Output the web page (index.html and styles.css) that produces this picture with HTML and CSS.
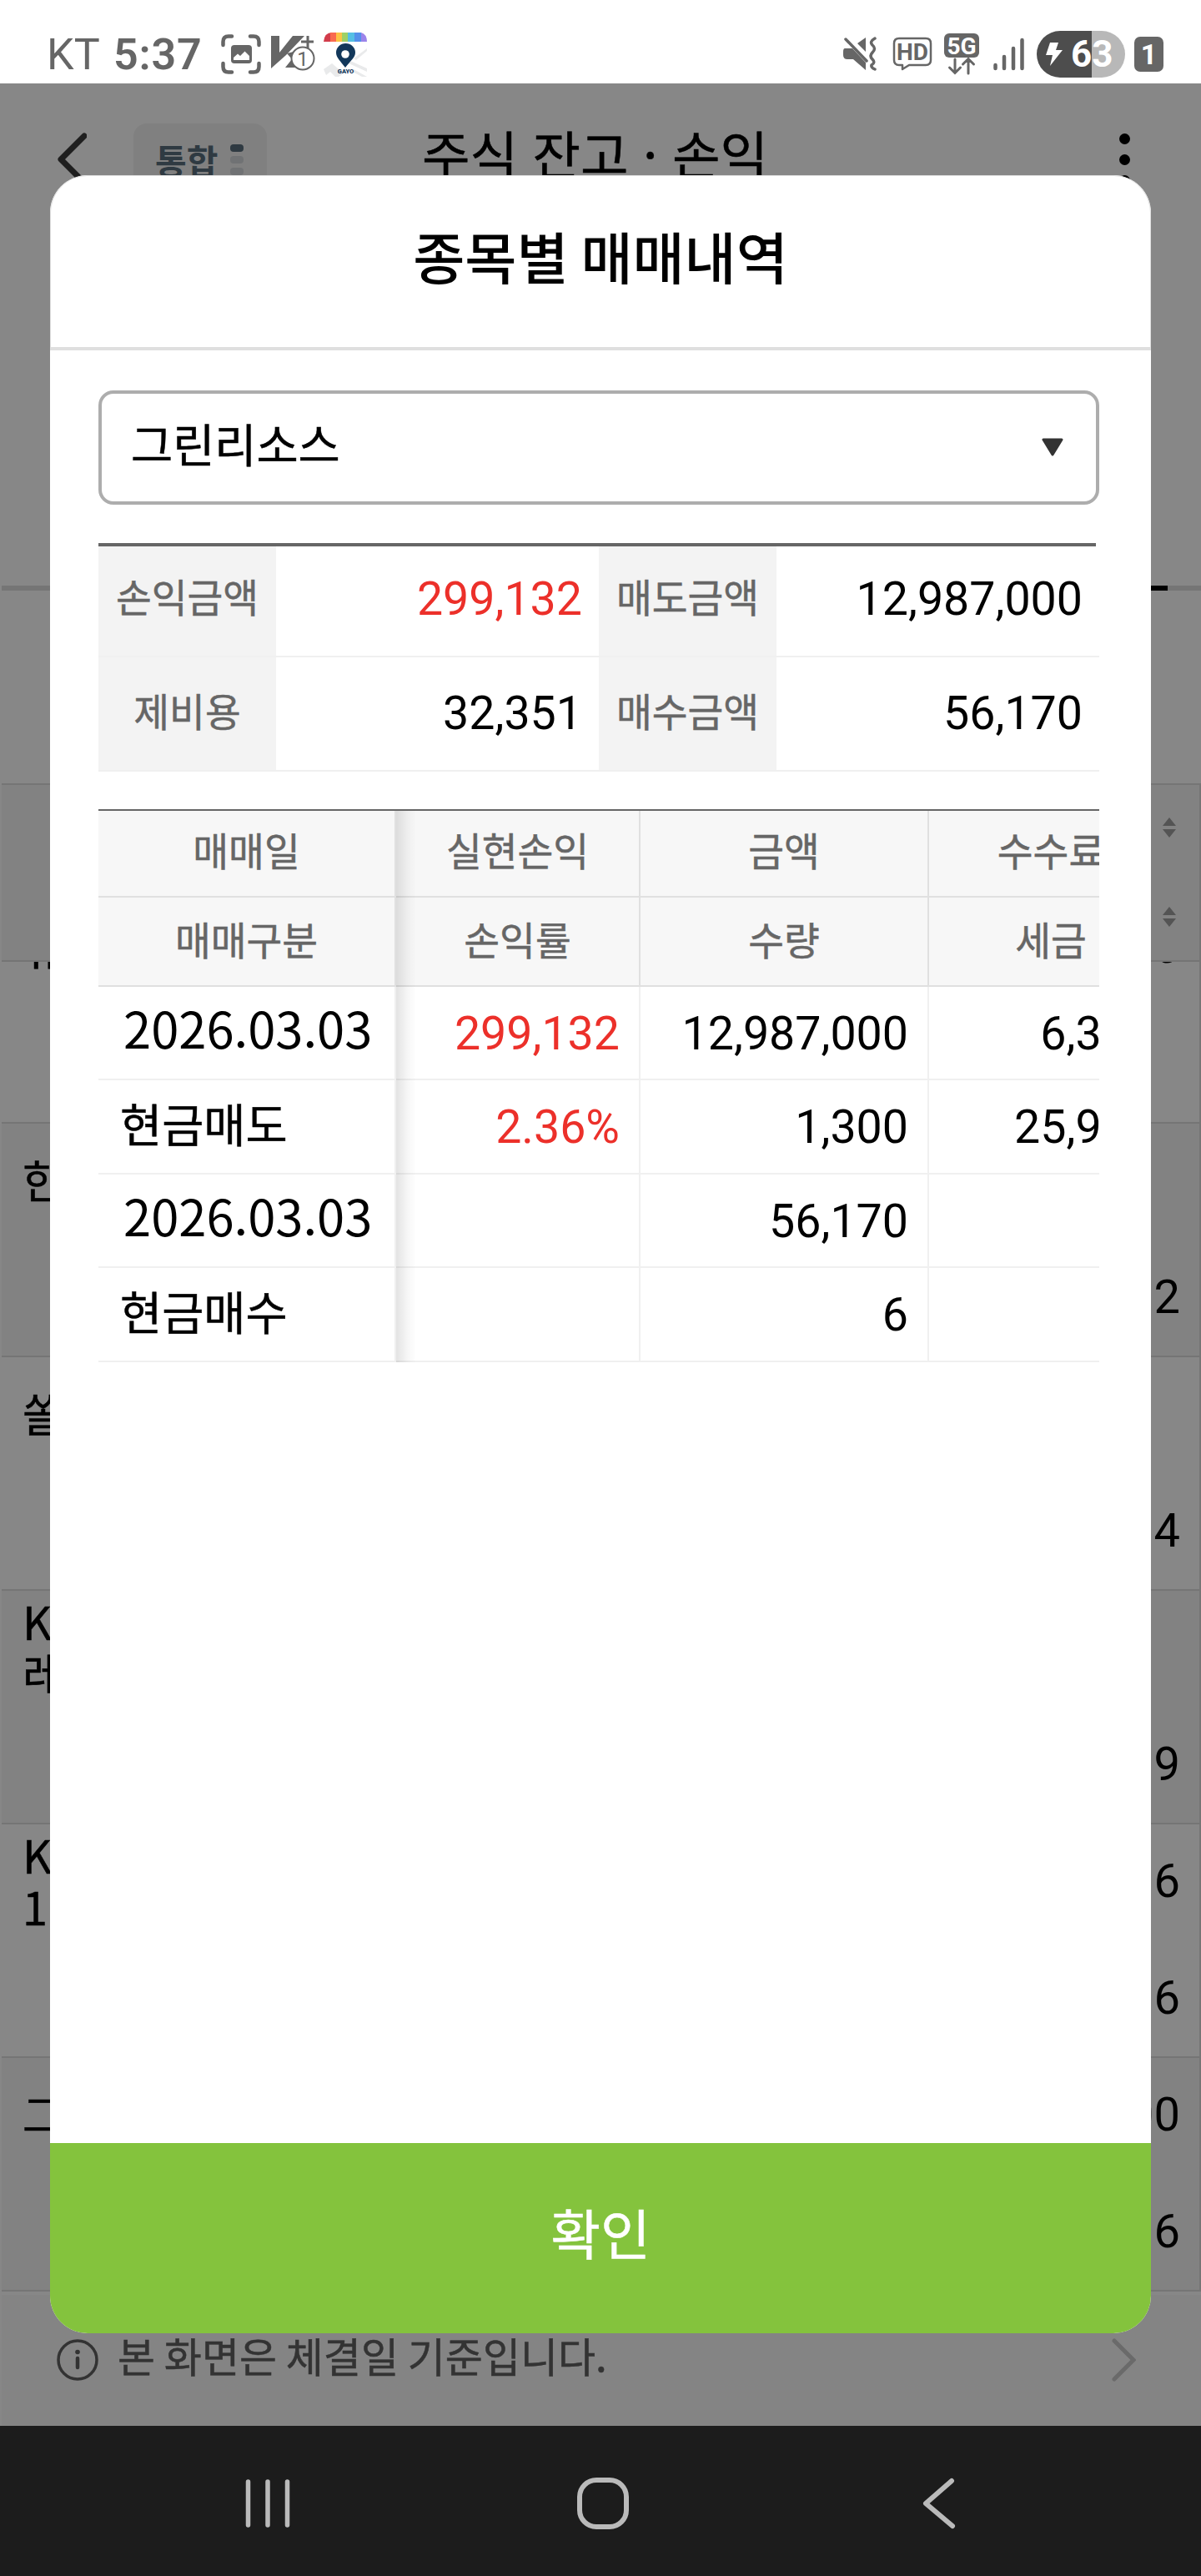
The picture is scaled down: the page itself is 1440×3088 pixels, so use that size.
FILE: index.html
```html
<!DOCTYPE html>
<html lang="ko">
<head>
    <meta charset="UTF-8">
    <meta name="viewport" content="width=device-width, initial-scale=1.0">
    <title>종목별 매매내역</title>
    <link rel="stylesheet" href="styles.css">
</head>
<body>
<div class="screen">
    <div class="statusbar">
        <div class="status-left">
            <span class="carrier">KT</span>
            <span class="time">5:37</span>
            <svg class="ic-shot" width="48" height="48" viewBox="0 0 48 48" fill="none">
                <path d="M2.500 13V9Q2.500 2.500 9 2.500H13M35 2.500H39Q45.500 2.500 45.500 9V13M45.500 35V39Q45.500 45.500 39 45.500H35M13 45.500H9Q2.500 45.500 2.500 39V35" stroke="#666" stroke-width="4.500" stroke-linecap="round"/>
                <rect x="12" y="13" width="25" height="22" rx="4" fill="#666"/>
                <path d="M15 31V28L20 23.500L23 26L28.500 20.500L34 26V31Z" fill="#fff"/>
            </svg>
            <svg class="ic-k" width="54" height="46" viewBox="0 0 54 46">
                <path d="M0 1H10V21L26 1H40L18 24L0 40Z" fill="#666"/>
                <path d="M17 39L25 29L19 22L27 20L32 39Z" fill="#666"/>
                <path d="M36 8H51M44 1V16" stroke="#666" stroke-width="3"/>
                <circle cx="38" cy="28" r="13.500" fill="#fff" stroke="#666" stroke-width="2"/>
                <text x="38" y="36.500" class="k-num">1</text>
            </svg>
            <svg class="ic-gayo" width="52" height="54" viewBox="0 0 52 54">
                <path d="M0 45L10 38L24 50L18 54H14L8 48L3 52ZM30 34L52 44V48L28 37ZM36 45L52 54H46L33 47ZM36 32L52 20V23L39 34Z" fill="#e9eaeb"/>
                <path d="M0 12Q1 1 10 1H8V12Z" fill="#d23c4b"/>
                <path d="M8 1H15V12H8Z" fill="#f96a50"/>
                <path d="M15 1H22V12H15Z" fill="#fdc344"/>
                <path d="M22 1H29V12H22Z" fill="#9ed166"/>
                <path d="M29 1H37V12H29Z" fill="#55bfe4"/>
                <path d="M37 1H45V12H37Z" fill="#5490ea"/>
                <path d="M45 1Q52 3 52 12H45Z" fill="#9c84ea"/>
                <path d="M26 43C20 35 15 31 15 25A11.500 11 0 0 1 38 25C38 31 32 35 26 43Z" fill="#12375a"/>
                <circle cx="26" cy="27" r="4.800" fill="#fff"/>
                <text x="26.500" y="50" class="gayo-text">GAYO</text>
            </svg>
        </div>
        <div class="status-right">
            <svg class="ic-mute" width="42" height="42" viewBox="0 0 42 42">
                <path d="M2 14H11L27 31V40L12 27H5Q0 27 0 22V18Q0 14 2 14ZM17 8L27 1V18Z" fill="#666"/>
                <path d="M3 3L28 29" stroke="#666" stroke-width="3.500" stroke-linecap="round"/>
                <path d="M38 2Q31 6 35 10Q40 14 35 19Q31 23 35 27Q39 31 34 34Q33 37 38 39" fill="none" stroke="#666" stroke-width="3.500" stroke-linecap="round"/>
            </svg>
            <svg class="ic-hd" width="48" height="42" viewBox="0 0 48 42">
                <path d="M8 2H40Q46 2 46 8V28Q46 34 40 34H20L12 39V34H8Q2 34 2 28V8Q2 2 8 2Z" fill="none" stroke="#666" stroke-width="2.500" stroke-linejoin="round"/>
                <text x="24" y="27.500" class="hd-text">HD</text>
            </svg>
            <svg class="ic-5g" width="42" height="50" viewBox="0 0 42 50">
                <rect x="0" y="0" width="42" height="29" rx="6" fill="#666"/>
                <text x="21" y="24.500" class="g-text">5G</text>
                <path d="M13 31V47M6.500 41L13 47.500L19.500 41M29 48V31M22.500 37L29 30.500L35.500 37" fill="none" stroke="#666" stroke-width="3" stroke-linecap="round"/>
            </svg>
            <svg class="ic-signal" width="37" height="40" viewBox="0 0 37 40">
                <path d="M2.500 33V37M13 23V37M24 13V37M34.500 3V37" stroke="#666" stroke-width="4.500" stroke-linecap="round"/>
            </svg>
            <div class="battery">
                <svg width="20" height="30" viewBox="0 0 20 30"><path d="M5 1H15L12 10H20L5 29L8 16H0Z" fill="#fff"/></svg>
                <span>63</span>
            </div>
            <div class="sim">1</div>
        </div>
    </div>

    <div class="app">
        <div class="app-header">
            <svg class="back" width="36" height="64" viewBox="0 0 36 64"><path d="M33 4L5 32L33 60" fill="none" stroke="#1f1f1f" stroke-width="7" stroke-linecap="round" stroke-linejoin="round"/></svg>
            <div class="pill">통합<span class="pill-dots"><i></i><i></i><i></i></span></div>
            <div class="app-title">주식 잔고 · 손익</div>
            <div class="kebab"><i></i><i></i><i></i></div>
        </div>
        <div class="tabs"><div class="tab-on"></div></div>
        <div class="list-head">
            <svg width="18" height="26" viewBox="0 0 18 26"><path d="M9 1L17 11H1ZM9 25L17 15H1Z" fill="#545454"/></svg>
            <svg width="18" height="26" viewBox="0 0 18 26"><path d="M9 1L17 11H1ZM9 25L17 15H1Z" fill="#545454"/></svg>
        </div>
        <div class="list">
            <div class="item"><div class="name">유</div><div class="num">0</div><div class="num"></div></div>
            <div class="item"><div class="name">한</div><div class="num"></div><div class="num">2</div></div>
            <div class="item"><div class="name">쏠</div><div class="num"></div><div class="num">4</div></div>
            <div class="item"><div class="name">K<br>레</div><div class="num"></div><div class="num">9</div></div>
            <div class="item"><div class="name">K<br>1</div><div class="num">6</div><div class="num">6</div></div>
            <div class="item"><div class="name">그</div><div class="num">00</div><div class="num">6</div></div>
        </div>
        <div class="notice">
            <svg width="50" height="50" viewBox="0 0 50 50"><circle cx="25" cy="25" r="23" fill="none" stroke="#333" stroke-width="3.500"/><circle cx="25" cy="15.500" r="2.800" fill="#333"/><path d="M25 23V34" stroke="#333" stroke-width="4.500" stroke-linecap="round"/></svg>
            <span>본 화면은 체결일 기준입니다.</span>
            <svg class="next" width="30" height="52" viewBox="0 0 30 52"><path d="M4 3L27 26L4 49" fill="none" stroke="#6a6a6a" stroke-width="5" stroke-linecap="round"/></svg>
        </div>
    </div>

    <div class="modal">
        <div class="modal-header">종목별 매매내역</div>
        <div class="modal-body">
            <div class="select">
                <span>그린리소스</span>
                <svg width="28" height="23" viewBox="0 0 28 23"><path d="M3 2H25L14 20Z" fill="#333" stroke="#333" stroke-width="3" stroke-linejoin="round"/></svg>
            </div>
            <div class="rule"></div>
            <div class="summary">
                <div class="label">손익금액</div><div class="value red">299,132</div>
                <div class="label">매도금액</div><div class="value">12,987,000</div>
                <div class="label low">제비용</div><div class="value low">32,351</div>
                <div class="label low">매수금액</div><div class="value low">56,170</div>
            </div>
            <div class="trades">
                <div class="grid">
                    <div class="th">매매일</div><div class="th">실현손익</div><div class="th">금액</div><div class="th">수수료</div>
                    <div class="th low">매매구분</div><div class="th low">손익률</div><div class="th low">수량</div><div class="th low">세금</div>
                    <div class="td date">2026.03.03</div><div class="td red">299,132</div><div class="td">12,987,000</div><div class="td">6,377</div>
                    <div class="td kind">현금매도</div><div class="td red">2.36%</div><div class="td">1,300</div><div class="td">25,974</div>
                    <div class="td date">2026.03.03</div><div class="td"></div><div class="td">56,170</div><div class="td"></div>
                    <div class="td kind">현금매수</div><div class="td"></div><div class="td">6</div><div class="td"></div>
                </div>
                <div class="shadow"></div>
            </div>
        </div>
        <div class="confirm">확인</div>
    </div>

    <div class="navbar">
        <svg width="54" height="60" viewBox="0 0 54 60"><path d="M3.500 4V56M27 4V56M50.500 4V56" stroke="#bababa" stroke-width="5.500" stroke-linecap="round"/></svg>
        <svg class="home" width="62" height="62" viewBox="0 0 62 62"><rect x="3" y="3" width="56" height="56" rx="20" fill="none" stroke="#bababa" stroke-width="6"/></svg>
        <svg width="40" height="62" viewBox="0 0 40 62"><path d="M35 4L4 31L36 58" fill="none" stroke="#bababa" stroke-width="6" stroke-linecap="round" stroke-linejoin="round"/></svg>
    </div>
</div>
</body>
</html>
```
FILE: styles.css
```css
*{
    box-sizing:border-box;
}
body{
    margin:0;
    font-family:"Noto Sans CJK KR", sans-serif;
    color:#000;
}
svg{
    display:block;
    flex:none;
}
.screen{
    position:relative;
    display:flex;
    flex-direction:column;
    width:1440px;
    height:3088px;
    overflow:hidden;
}

/* status bar */
.statusbar{
    display:flex;
    justify-content:space-between;
    height:100px;
    background:#fff;
    font-family:Roboto, sans-serif;
    color:#666;
}
.status-left, .status-right{
    display:flex;
    align-items:center;
    height:60px;
    margin-top:35px;
}
.status-left{
    padding-left:56px;
}
.status-right{
    padding-right:45px;
}
.carrier{
    width:80px;
    font-size:52px;
}
.time{
    width:129px;
    font-size:52px;
    font-weight:600;
    letter-spacing:0.8px;
}
.ic-k{
    margin-left:12px;
}
.ic-gayo{
    margin-left:9px;
}
.k-num{
    font-size:24px;
    fill:#666;
    text-anchor:middle;
}
.gayo-text{
    font-size:7.5px;
    font-weight:900;
    fill:#12375a;
    text-anchor:middle;
}
.hd-text{
    font-size:28px;
    font-weight:700;
    fill:#666;
    text-anchor:middle;
}
.g-text{
    font-size:28px;
    font-weight:700;
    fill:#fff;
    text-anchor:middle;
}
.ic-hd{
    margin-left:17px;
}
.ic-5g{
    margin-left:14px;
}
.ic-signal{
    margin-left:17px;
}
.battery{
    display:flex;
    align-items:center;
    width:106px;
    height:56px;
    margin-left:15px;
    padding-left:11px;
    border-radius:28px;
    background:linear-gradient(to right, #4d4d4d 66px, #b8b8b8 66px);
    color:#fff;
    font-size:44px;
    font-weight:700;
}
.battery span{
    margin-left:10px;
}
.sim{
    width:35px;
    height:42px;
    margin-left:11px;
    border-radius:7px;
    background:#666;
    color:#fff;
    font-size:34px;
    font-weight:700;
    line-height:42px;
    text-align:center;
}

/* page behind the popup */
.app{
    flex:1;
    background:#878787;
}
.app-header{
    display:flex;
    align-items:center;
    height:182px;
    padding:0 85px 0 68px;
}
.pill{
    display:flex;
    align-items:center;
    width:160px;
    height:86px;
    margin-left:56px;
    padding-left:26px;
    border-radius:16px;
    background:#808080;
    color:#2f3a42;
    font-size:41px;
    font-weight:700;
    line-height:60px;
}
.pill-dots{
    display:flex;
    flex-direction:column;
    gap:5px;
    margin-left:15px;
}
.pill-dots i{
    width:16px;
    height:9px;
    border-radius:4px;
    background:#707274;
}
.pill-dots i:first-child{
    background:#2f3a42;
}
.app-title{
    flex:1;
    margin-left:186px;
    padding-bottom:17px;
    font-size:62.5px;
    line-height:80px;
}
.kebab{
    display:flex;
    flex-direction:column;
    gap:12px;
}
.kebab i{
    width:13px;
    height:13px;
    border-radius:50%;
    background:#000;
}
.tabs{
    height:426px;
    margin-left:2px;
    border-bottom:6px solid #757575;
}
.tab-on{
    width:240px;
    height:426px;
    margin-left:1158px;
    border-bottom:6px solid #000;
}
.list-head{
    display:flex;
    flex-direction:column;
    align-items:flex-end;
    gap:81px;
    height:214px;
    margin:231px 0 0 2px;
    padding:38px 27px 0 0;
    border:solid #757575;
    border-width:2px 2px 2px 0;
    background:#828282;
}
.list{
    display:flex;
    flex-direction:column;
    justify-content:flex-end;
    height:1594px;
    margin-left:2px;
    border-right:2px solid #757575;
    overflow:hidden;
}
.item{
    display:grid;
    grid-template-columns:1fr 1fr;
    grid-template-rows:140px 138px;
    flex:none;
    height:280px;
    border-bottom:2px solid #757575;
}
.item:nth-child(even){
    background:#828282;
}
.name{
    display:flex;
    align-items:center;
    padding:0 0 7px 25px;
    font-size:54px;
    line-height:62px;
}
.num{
    grid-column:2;
    padding-right:23px;
    font-family:Roboto, sans-serif;
    font-size:56px;
    line-height:136px;
    text-align:right;
}
.notice{
    display:flex;
    align-items:center;
    height:157px;
    margin:4px 0 0 2px;
    padding:0 78px 2px 66px;
    background:#848484;
    color:#333;
    font-size:49px;
}
.notice span{
    flex:1;
    margin-left:23px;
    padding-bottom:11px;
    line-height:60px;
    word-spacing:-3px;
}
/* a touch heavier than regular */
.app-title, .name, .notice span, .select span, .label, .th, .td.kind, .confirm{
    -webkit-text-stroke:0.5px currentColor;
}

/* popup */
.modal{
    position:absolute;
    top:210px;
    left:60px;
    display:flex;
    flex-direction:column;
    width:1320px;
    height:2587px;
    border-radius:45px;
    background:#fff;
    overflow:hidden;
}
.modal-header{
    height:210px;
    border:solid #dfdfdf;
    border-width:1px 1px 4px;
    border-radius:45px 45px 0 0;
    font-size:67.5px;
    font-weight:500;
    line-height:190px;
    text-align:center;
    word-spacing:-4px;
}
.modal-body{
    flex:1;
    padding:48px 62px 0 58px;
}
.select{
    display:flex;
    justify-content:space-between;
    align-items:center;
    height:137px;
    padding:0 38px 0 35px;
    border:4px solid #adadad;
    border-radius:18px;
    font-size:54.5px;
}
.select span{
    padding-bottom:12px;
    line-height:70px;
}
.rule{
    width:1196px;
    height:4px;
    margin-top:46px;
    background:#666;
}
.summary{
    display:grid;
    grid-template-columns:213px 387px 213px 387px;
    grid-template-rows:133px 137px;
}
.summary div{
    border-bottom:2px solid #f0f0f0;
}
.label{
    background:#f3f3f3;
    color:#666;
    font-size:46.5px;
    line-height:118px;
    text-align:center;
}
.label.low{
    line-height:125px;
}
.value{
    padding-right:20px;
    font-family:Roboto, sans-serif;
    font-size:55.5px;
    line-height:128px;
    text-align:right;
}
.value.low{
    line-height:135px;
}
.red, .td.red{
    color:#ec302a;
}
.trades{
    position:relative;
    margin-top:45px;
    border-top:2px solid #666;
    overflow:hidden;
}
.grid{
    display:grid;
    grid-template-columns:357px 293px 346px 294px;
    grid-template-rows:104px 107px 112px 113px 112px 113px;
    width:1290px;
}
.th{
    border:solid #e0e0e0;
    border-width:0 2px 2px 0;
    background:#f7f7f7;
    color:#666;
    font-size:46.5px;
    line-height:92px;
    text-align:center;
}
.th.low{
    line-height:97px;
}
.td{
    padding-right:23px;
    border:solid #f0f0f0;
    border-width:0 2px 2px 0;
    font-family:Roboto, sans-serif;
    font-size:55.5px;
    line-height:113px;
    text-align:right;
}
.td.date, .td.kind{
    padding:0 0 0 26px;
    font-family:"Noto Sans CJK KR", sans-serif;
    text-align:left;
}
.td.date{
    padding-left:30px;
    font-size:59.7px;
    line-height:96px;
}
.td.kind{
    font-size:54.5px;
    line-height:102px;
}
.shadow{
    position:absolute;
    top:0;
    left:357px;
    width:24px;
    height:100%;
    background:linear-gradient(to right, rgba(0,0,0,.11), rgba(0,0,0,.03) 60%, rgba(0,0,0,0));
}
.confirm{
    height:228px;
    background:#84c33d;
    color:#fff;
    font-size:65px;
    line-height:212px;
    text-align:center;
}

/* android navigation */
.navbar{
    display:flex;
    align-items:center;
    height:180px;
    padding:6px 294px 0;
    justify-content:space-between;
    background:#1c1c1c;
}
.home{
    margin-right:8px;
}
```
